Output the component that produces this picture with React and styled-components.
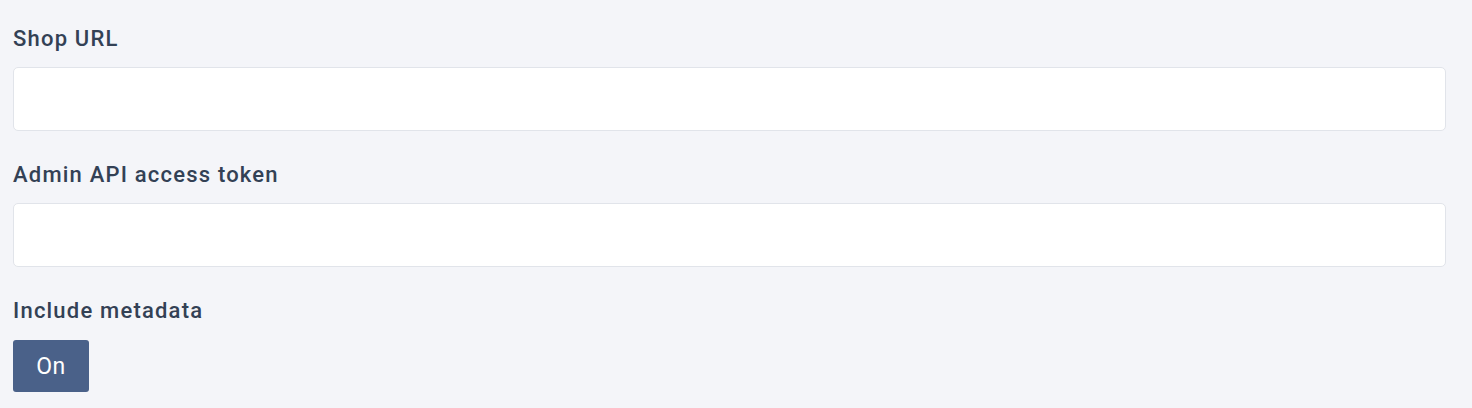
import styled, { createGlobalStyle } from "styled-components";

const GlobalStyle = createGlobalStyle`
  html, body {
    margin: 0;
    padding: 0;
    background: #f4f5f9;
  }
  body {
    font-family: Roboto, "Liberation Sans", sans-serif;
  }
`;

const Form = styled.div`
  padding: 23px 26px 16px 13px;
  display: flex;
  flex-direction: column;
`;

const Field = styled.div`
  display: flex;
  flex-direction: column;
  margin-bottom: 28px;
`;

const Label = styled.label`
  font-size: 22px;
  font-weight: 500;
  letter-spacing: 1.2px;
  line-height: 32px;
  color: #334155;
  margin-bottom: 12px;
`;

const Input = styled.input`
  height: 64px;
  box-sizing: border-box;
  border: 1px solid #e1e4ea;
  border-radius: 5px;
  background: #fff;
  padding: 0 16px;
  font-size: 20px;
  outline: none;
`;

const Toggle = styled.button`
  width: 76px;
  height: 52px;
  margin-top: 1px;
  border: none;
  border-radius: 3px;
  background: ${(p) => (p.$on ? "#4a6189" : "#c4cad6")};
  color: #fff;
  font-family: Roboto, "Liberation Sans", sans-serif;
  font-size: 23px;
  letter-spacing: 0.6px;
  cursor: pointer;
  align-self: flex-start;
`;

export default function App() {
  return (
    <>
      <GlobalStyle />
      <Form>
        <Field>
          <Label>Shop URL</Label>
          <Input />
        </Field>
        <Field>
          <Label>Admin API access token</Label>
          <Input />
        </Field>
        <Label>Include metadata</Label>
        <Toggle $on>On</Toggle>
      </Form>
    </>
  );
}
